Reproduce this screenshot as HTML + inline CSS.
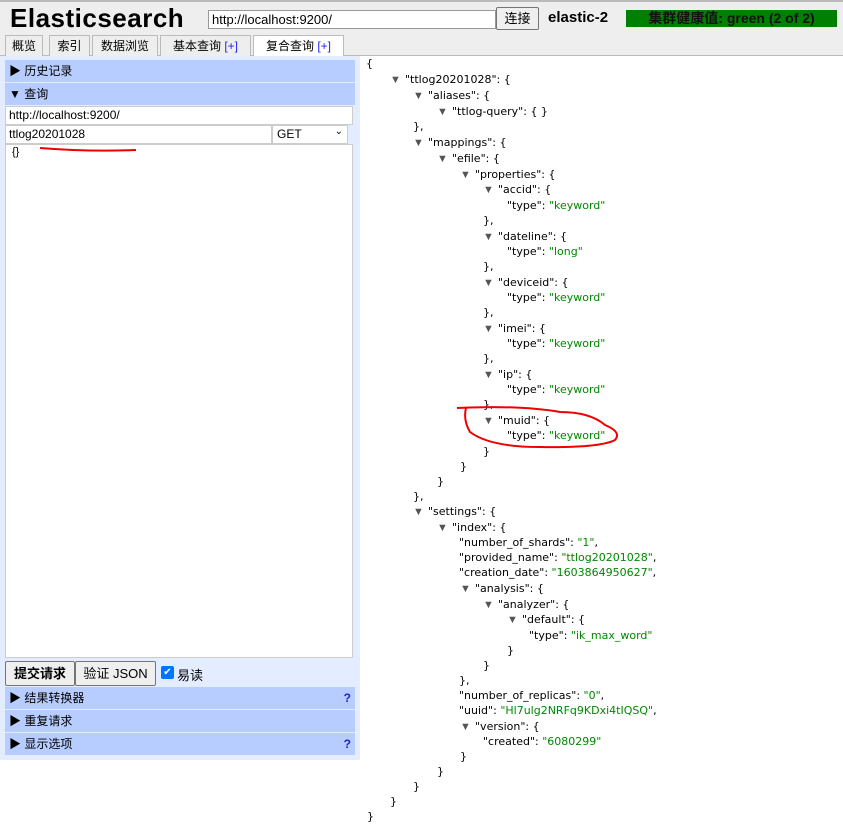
<!DOCTYPE html>
<html><head><meta charset="utf-8">
<style>
*{margin:0;padding:0;box-sizing:border-box}
body{width:843px;height:829px;background:#fff;font-family:"Liberation Sans","Noto Sans CJK SC",sans-serif;font-size:12px;color:#000;position:relative;overflow:hidden}
.hdr{position:absolute;left:0;top:0;width:843px;height:56px;background:#eee;border-top:2px solid #bbb;border-bottom:1px solid #bbb}
.a{position:absolute}
.title{left:10px;top:3px;font-size:26px;font-weight:bold;letter-spacing:0.5px}
.inp{background:#fff;border:1px solid #999;font-size:12px;padding:1px 3px;white-space:nowrap;overflow:hidden}
.btn{background:#efefef;border:1px solid #767676;border-radius:2px;font-size:13px;text-align:center}
.tab{position:absolute;top:35px;height:21px;border:1px solid #bbb;border-bottom:none;background:#eee;font-size:12px;line-height:20px;text-align:center}
.tab b{font-weight:normal;color:#22e}
.panel{position:absolute;left:0;top:56px;width:360px;height:704px;background:#e3edff}
.sec{position:absolute;left:5px;width:350px;height:22px;background:#b8cdff;font-size:12px;line-height:22px;padding-left:4px}
.q{position:absolute;right:4px;color:#22c;font-weight:bold}
.j{position:absolute;font-family:"DejaVu Sans",sans-serif;font-size:11px;white-space:nowrap;line-height:15px;margin-top:2px}
.s{color:#080}
.t{position:absolute;font-size:11px;color:#555;line-height:15px;margin-top:2px}
</style></head><body>
<div class="hdr"></div>
<div class="a title">Elasticsearch</div>
<div class="a inp" style="left:208px;top:10px;width:288px;height:19px;font-size:13px">http://localhost:9200/</div>
<div class="a btn" style="left:496px;top:7px;width:43px;height:23px;line-height:21px">连接</div>
<div class="a" style="left:548px;top:9px;font-size:15px;font-weight:bold">elastic-2</div>
<div class="a" style="left:626px;top:10px;width:211px;height:17px;background:#008000;font-size:14px;font-weight:bold;line-height:17px;text-align:center;color:#111">集群健康值: green (2 of 2)</div>
<div class="tab" style="left:5px;width:38px">概览</div>
<div class="tab" style="left:49px;width:41px">索引</div>
<div class="tab" style="left:92px;width:66px">数据浏览</div>
<div class="tab" style="left:160px;width:91px">基本查询 <b>[+]</b></div>
<div class="tab" style="left:253px;width:91px;background:#fff;height:22px">复合查询 <b>[+]</b></div>

<div class="panel"></div>
<div class="sec" style="top:60px">▶ 历史记录</div>
<div class="sec" style="top:83px">▼ 查询</div>
<div class="a inp" style="left:5px;top:106px;width:348px;height:19px;border-color:#ccc">http://localhost:9200/</div>
<div class="a inp" style="left:5px;top:125px;width:267px;height:19px;border-color:#ccc">ttlog20201028</div>
<div class="a inp" style="left:272px;top:125px;width:76px;height:19px;padding-left:4px;border-color:#ccc">GET<span style="position:absolute;right:4px;top:0;font-size:10px">⌄</span></div>
<div class="a inp" style="left:5px;top:144px;width:348px;height:514px;border-color:#ccc;font-size:11px;padding-left:6px">{}</div>
<div class="a btn" style="left:5px;top:661px;width:70px;height:25px;line-height:23px;font-weight:bold">提交请求</div>
<div class="a btn" style="left:75px;top:661px;width:81px;height:25px;line-height:23px">验证 JSON</div>
<div class="a" style="left:161px;top:666px;width:13px;height:13px;background:#0075ff;border-radius:2px;color:#fff;font-size:10px;line-height:13px;text-align:center">✔</div>
<div class="a" style="left:177px;top:665px;font-size:13px">易读</div>
<div class="sec" style="top:687px">▶ 结果转换器<span class="q">?</span></div>
<div class="sec" style="top:710px">▶ 重复请求</div>
<div class="sec" style="top:733px">▶ 显示选项<span class="q">?</span></div>

<div class="j" style="left:366px;top:54px">{</div>
<div class="t" style="left:390px;top:71px">▼</div><div class="j" style="left:405px;top:70px">"ttlog20201028": {</div>
<div class="t" style="left:413px;top:87px">▼</div><div class="j" style="left:428px;top:86px">"aliases": {</div>
<div class="t" style="left:437px;top:103px">▼</div><div class="j" style="left:452px;top:102px">"ttlog-query": { }</div>
<div class="j" style="left:413px;top:117px">},</div>
<div class="t" style="left:413px;top:134px">▼</div><div class="j" style="left:428px;top:133px">"mappings": {</div>
<div class="t" style="left:437px;top:150px">▼</div><div class="j" style="left:452px;top:149px">"efile": {</div>
<div class="t" style="left:460px;top:166px">▼</div><div class="j" style="left:475px;top:165px">"properties": {</div>
<div class="t" style="left:483px;top:181px">▼</div><div class="j" style="left:498px;top:180px">"accid": {</div>
<div class="j" style="left:507px;top:196px">"type": <span class="s">"keyword"</span></div>
<div class="j" style="left:483px;top:211px">},</div>
<div class="t" style="left:483px;top:228px">▼</div><div class="j" style="left:498px;top:227px">"dateline": {</div>
<div class="j" style="left:507px;top:242px">"type": <span class="s">"long"</span></div>
<div class="j" style="left:483px;top:257px">},</div>
<div class="t" style="left:483px;top:274px">▼</div><div class="j" style="left:498px;top:273px">"deviceid": {</div>
<div class="j" style="left:507px;top:288px">"type": <span class="s">"keyword"</span></div>
<div class="j" style="left:483px;top:303px">},</div>
<div class="t" style="left:483px;top:320px">▼</div><div class="j" style="left:498px;top:319px">"imei": {</div>
<div class="j" style="left:507px;top:334px">"type": <span class="s">"keyword"</span></div>
<div class="j" style="left:483px;top:349px">},</div>
<div class="t" style="left:483px;top:366px">▼</div><div class="j" style="left:498px;top:365px">"ip": {</div>
<div class="j" style="left:507px;top:380px">"type": <span class="s">"keyword"</span></div>
<div class="j" style="left:483px;top:395px">},</div>
<div class="t" style="left:483px;top:412px">▼</div><div class="j" style="left:498px;top:411px">"muid": {</div>
<div class="j" style="left:507px;top:426px">"type": <span class="s">"keyword"</span></div>
<div class="j" style="left:483px;top:442px">}</div>
<div class="j" style="left:460px;top:457px">}</div>
<div class="j" style="left:437px;top:472px">}</div>
<div class="j" style="left:413px;top:487px">},</div>
<div class="t" style="left:413px;top:503px">▼</div><div class="j" style="left:428px;top:502px">"settings": {</div>
<div class="t" style="left:437px;top:519px">▼</div><div class="j" style="left:452px;top:518px">"index": {</div>
<div class="j" style="left:459px;top:533px">"number_of_shards": <span class="s">"1"</span>,</div>
<div class="j" style="left:459px;top:548px">"provided_name": <span class="s">"ttlog20201028"</span>,</div>
<div class="j" style="left:459px;top:563px">"creation_date": <span class="s">"1603864950627"</span>,</div>
<div class="t" style="left:460px;top:580px">▼</div><div class="j" style="left:475px;top:579px">"analysis": {</div>
<div class="t" style="left:483px;top:596px">▼</div><div class="j" style="left:498px;top:595px">"analyzer": {</div>
<div class="t" style="left:507px;top:611px">▼</div><div class="j" style="left:522px;top:610px">"default": {</div>
<div class="j" style="left:529px;top:626px">"type": <span class="s">"ik_max_word"</span></div>
<div class="j" style="left:507px;top:641px">}</div>
<div class="j" style="left:483px;top:656px">}</div>
<div class="j" style="left:459px;top:671px">},</div>
<div class="j" style="left:459px;top:686px">"number_of_replicas": <span class="s">"0"</span>,</div>
<div class="j" style="left:459px;top:701px">"uuid": <span class="s">"Hl7ulg2NRFq9KDxi4tIQSQ"</span>,</div>
<div class="t" style="left:460px;top:718px">▼</div><div class="j" style="left:475px;top:717px">"version": {</div>
<div class="j" style="left:483px;top:732px">"created": <span class="s">"6080299"</span></div>
<div class="j" style="left:460px;top:747px">}</div>
<div class="j" style="left:437px;top:762px">}</div>
<div class="j" style="left:413px;top:777px">}</div>
<div class="j" style="left:390px;top:792px">}</div>
<div class="j" style="left:367px;top:807px">}</div>

<svg class="a" style="left:0;top:0" width="843" height="829">
<path d="M40 148 Q90 152 136 150" stroke="#e00" stroke-width="2" fill="none"/>
<path d="M457 408 Q520 405 560 412 Q590 412 605 425 Q622 432 615 440 Q600 448 540 447 Q490 447 470 432 Q463 420 466 408" stroke="#e00" stroke-width="2" fill="none"/>
</svg>
</body></html>
